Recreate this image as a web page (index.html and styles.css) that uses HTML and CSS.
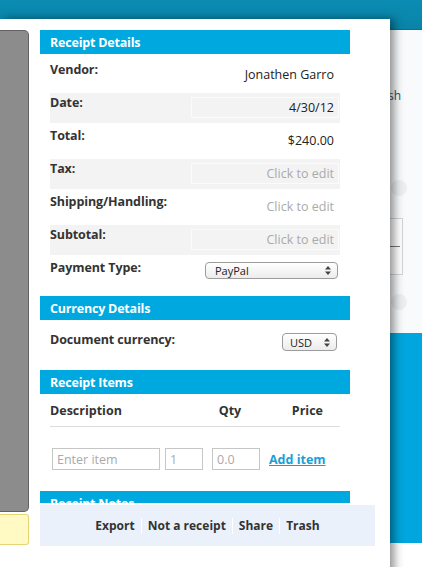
FILE: index.html
```html
<!DOCTYPE html>
<html>
<head>
<meta charset="utf-8">
<link rel="stylesheet" href="styles.css">
</head>
<body>
<div class="page">
  <header class="topbar"></header>
  <div class="page-body">
    <div class="side">
      <a class="refresh" href="#">Refresh</a>
      <div class="dot dot-a"></div>
      <div class="side-box"><div class="side-box-line"></div></div>
      <div class="dot dot-b"></div>
    </div>
    <div class="promo"></div>
  </div>
</div>

<div class="modal">
  <div class="preview-col">
    <div class="preview"></div>
    <div class="note"></div>
  </div>
  <div class="details-col">
    <div class="scroll">
      <div class="sec-head">Receipt Details</div>
      <div class="rows">
        <div class="row"><div class="lbl">Vendor:</div><div class="val">Jonathen Garro</div></div>
        <div class="row alt"><div class="lbl">Date:</div><div class="val">4/30/12</div></div>
        <div class="row"><div class="lbl">Total:</div><div class="val">$240.00</div></div>
        <div class="row alt"><div class="lbl">Tax:</div><div class="val empty">Click to edit</div></div>
        <div class="row"><div class="lbl">Shipping/Handling:</div><div class="val empty">Click to edit</div></div>
        <div class="row alt"><div class="lbl">Subtotal:</div><div class="val empty">Click to edit</div></div>
        <div class="row"><div class="lbl">Payment Type:</div>
          <div class="select select-pay"><span>PayPal</span>
            <svg class="arrows" width="6" height="9" viewBox="0 0 6 9"><path d="M3 0L6 3.5H0Z M3 9L6 5.5H0Z" fill="#444"/></svg>
          </div>
        </div>
      </div>

      <div class="sec-head sec-gap">Currency Details</div>
      <div class="cur-body">
        <div class="row"><div class="lbl">Document currency:</div>
          <div class="select select-cur"><span>USD</span>
            <svg class="arrows" width="6" height="9" viewBox="0 0 6 9"><path d="M3 0L6 3.5H0Z M3 9L6 5.5H0Z" fill="#444"/></svg>
          </div>
        </div>
      </div>

      <div class="sec-head">Receipt Items</div>
      <div class="items">
        <div class="items-head">
          <div>Description</div>
          <div class="c-qty">Qty</div>
          <div class="c-price">Price</div>
        </div>
        <div class="item-form">
          <input class="in in-desc" placeholder="Enter item">
          <input class="in in-qty" placeholder="1">
          <input class="in in-price" placeholder="0.0">
          <a class="add" href="#">Add item</a>
        </div>
      </div>

      <div class="sec-head">Receipt Notes</div>
    </div>
    <div class="footer">
      <span class="act">Export</span>
      <span class="act">Not a receipt</span>
      <span class="act">Share</span>
      <span class="act">Trash</span>
    </div>
  </div>
</div>
</body>
</html>
```

FILE: styles.css
```css
* { box-sizing: border-box; }
html, body {
  margin: 0;
  padding: 0;
}
body {
  width: 422px;
  height: 567px;
  overflow: hidden;
  background: #ffffff;
  font-family: "Open Sans", "DejaVu Sans", sans-serif;
  position: relative;
}

/* background page */
.topbar {
  height: 30px;
  background: linear-gradient(#0b8cb3, #0a84a8);
  border-bottom: 1px solid #0a6f8d;
}
.side {
  height: 303px;
  background: #f9fafb;
  display: flex;
  flex-direction: column;
  align-items: flex-end;
  padding: 58px 21px 0 0;
}
.refresh {
  font-size: 12px;
  line-height: 16px;
  color: #2c4f73;
  text-decoration: none;
}
.dot {
  width: 16px;
  height: 16px;
  border-radius: 50%;
  background: #eceeef;
  margin-right: -6px;
}
.dot-a { margin-top: 76px; }
.dot-b { margin-top: 19px; }
.side-box {
  width: 60px;
  height: 57px;
  margin-top: 22px;
  margin-right: -2px;
  background: #fff;
  border: 1px solid #d4d4d4;
  display: flex;
  align-items: center;
  justify-content: flex-end;
}
.side-box-line {
  width: 10px;
  height: 1px;
  background: #777;
  margin-right: 2px;
}
.promo {
  height: 210px;
  background: #00a6dd;
}

/* modal */
.modal {
  position: absolute;
  left: 0;
  top: 19px;
  width: 390px;
  height: 560px;
  background: #ffffff;
  box-shadow: 4px 0 9px rgba(0, 0, 0, 0.45);
  display: grid;
  grid-template-columns: 29px 335px;
  column-gap: 11px;
  align-items: start;
  padding-top: 11px;
}
.preview-col {
  display: flex;
  flex-direction: column;
  gap: 2px;
}
.preview {
  height: 482px;
  background: #8c8c8c;
  border: 1px solid #626262;
  border-left: none;
  border-radius: 0 5px 5px 0;
}
.note {
  height: 31px;
  background: #fff9c4;
  border: 1px solid #e6d676;
  border-left: none;
  border-radius: 0 3px 3px 0;
}

.details-col {
  display: flex;
  flex-direction: column;
}
.scroll {
  width: 310px;
  height: 473px;
  overflow: hidden;
}
.sec-head {
  height: 24px;
  line-height: 25px;
  padding-left: 10px;
  background: #00a8e0;
  color: #ffffff;
  font-weight: 700;
  font-size: 12.5px;
  letter-spacing: -0.2px;
  flex: none;
}
.sec-gap { margin-top: 8px; }

.rows {
  padding: 6px 10px 0;
}
.row {
  display: flex;
  height: 30px;
  margin-bottom: 3px;
}
.row.alt { background: #f3f3f3; }
.lbl {
  width: 141px;
  flex: none;
  padding-top: 1px;
  line-height: 18px;
  font-size: 12.5px;
  font-weight: 700;
  color: #333;
  letter-spacing: -0.1px;
}
.val {
  flex: 1;
  margin: 4px 1px 0 0;
  height: 21px;
  border: 1px solid transparent;
  text-align: right;
  padding-right: 4px;
  line-height: 20px;
  font-size: 12.5px;
  color: #222;
}
.row.alt .val { border-color: #fbfbfb; }
.val.empty { color: #aaaaaa; }

.select {
  margin: 4px 2px 0 auto;
  height: 17px;
  border: 1px solid #9c9c9c;
  border-radius: 4px;
  background: linear-gradient(#ffffff, #ececec);
  display: flex;
  align-items: center;
  justify-content: space-between;
  padding: 0 6px 0 9px;
  font-size: 11px;
  color: #222;
}
.select-pay { width: 133px; }
.select-cur { width: 55px; height: 18px; margin-top: 3px; margin-right: 3px; padding-left: 7px; }

.cur-body {
  padding: 10px 10px 7px;
}

.items {
  padding: 0 10px 21px;
}
.items-head {
  display: grid;
  grid-template-columns: 150px 60px 1fr;
  padding: 8px 0 6px;
  line-height: 18px;
  font-size: 12.5px;
  font-weight: 700;
  color: #333;
  border-bottom: 1px solid #dcdcdc;
}
.c-qty { text-align: center; }
.c-price { text-align: right; padding-right: 17px; }
.item-form {
  display: flex;
  align-items: center;
  margin-top: 21px;
  padding-left: 2px;
}
.in {
  height: 22px;
  border: 1px solid #c6c6c6;
  padding: 0 4px;
  font-family: "Open Sans", "DejaVu Sans", sans-serif;
  font-size: 12.5px;
  color: #333;
  background: #fff;
  outline: none;
}
.in::placeholder { color: #aaaaaa; }
.in-desc { width: 108px; }
.in-qty { width: 38px; margin-left: 5px; }
.in-price { width: 48px; margin-left: 9px; }
.add {
  margin-left: 9px;
  font-size: 12.5px;
  font-weight: 700;
  color: #1b9fd3;
  text-decoration: underline;
}

.footer {
  margin-top: 2px;
  height: 41px;
  background: #eaf1fb;
  display: flex;
  justify-content: center;
  align-items: center;
  font-size: 12px;
  font-weight: 700;
  color: #333;
}
.act {
  padding: 0 6px;
  line-height: 16px;
  border-left: 1px solid #ffffff;
}
.act:first-child { border-left: none; }
```
